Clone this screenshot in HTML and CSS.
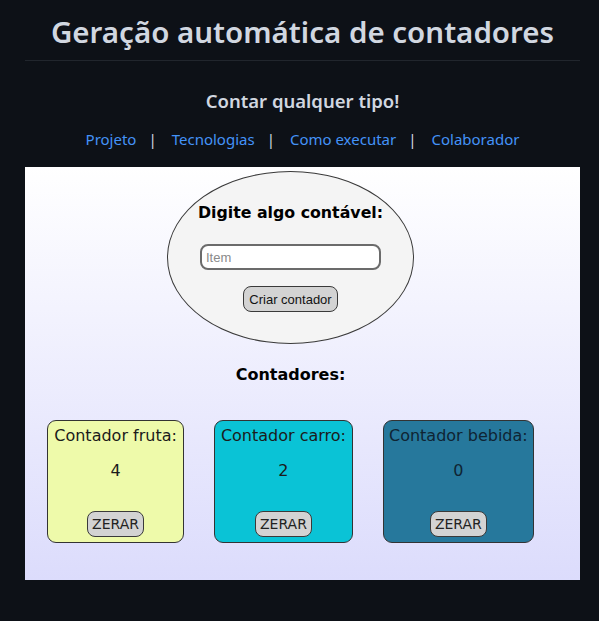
FILE: index.html
```html
<!DOCTYPE html>
<html lang="pt-BR">
<head>
<meta charset="utf-8">
<title>Geração automática de contadores</title>
<link rel="stylesheet" href="styles.css">
</head>
<body>
<main class="readme">
  <h1 class="title">Geração automática de contadores</h1>
  <h3 class="subtitle">Contar qualquer tipo!</h3>
  <nav class="links">
    <a href="#projeto">Projeto</a><span class="sep">|</span><a href="#tecnologias">Tecnologias</a><span class="sep">|</span><a href="#executar">Como executar</a><span class="sep">|</span><a href="#colaborador">Colaborador</a>
  </nav>
  <div class="shot">
    <div class="app">
      <div class="oval">
        <div class="oval-title">Digite algo contável:</div>
        <input class="item-input" type="text" placeholder="Item">
        <button class="create-btn">Criar contador</button>
      </div>
      <div class="counters-title">Contadores:</div>
      <div class="cards">
        <div class="card card-yellow">
          <div class="card-title">Contador fruta:</div>
          <div class="card-num">4</div>
          <button class="zero-btn">ZERAR</button>
        </div>
        <div class="card card-cyan">
          <div class="card-title">Contador carro:</div>
          <div class="card-num">2</div>
          <button class="zero-btn">ZERAR</button>
        </div>
        <div class="card card-blue">
          <div class="card-title">Contador bebida:</div>
          <div class="card-num">0</div>
          <button class="zero-btn">ZERAR</button>
        </div>
      </div>
    </div>
  </div>
</main>
</body>
</html>
```
FILE: styles.css
```css
html, body {
  margin: 0;
  padding: 0;
  background: #0d1117;
}
body {
  font-family: "Noto Sans", "Open Sans", sans-serif;
  color: #d1d7e0;
}
.readme {
  width: 555px;
  padding: 12px 0 0 25px;
}
.title {
  margin: 0;
  font-size: 29.5px;
  line-height: 40px;
  font-weight: 600;
  text-align: center;
  padding-bottom: 8px;
  border-bottom: 1px solid #21262d;
  color: #d1d7e0;
}
.subtitle {
  margin: 28px 0 0;
  font-size: 18.5px;
  line-height: 24px;
  font-weight: 600;
  text-align: center;
}
.links {
  margin-top: 14px;
  text-align: center;
  font-size: 15px;
  line-height: 24px;
}
.links a {
  color: #4493f8;
  text-decoration: none;
}
.sep {
  color: #d1d7e0;
  margin: 0 15px 0 12px;
}
.shot {
  margin-top: 16px;
  height: 413px;
  background: linear-gradient(to bottom, #ffffff 0%, #dcdcfc 100%);
  box-sizing: border-box;
  padding: 4px 24px 0 0;
}
.app {
  display: flex;
  flex-direction: column;
  align-items: center;
  font-family: "DejaVu Sans", Verdana, sans-serif;
  color: #111;
}
.oval {
  width: 247px;
  height: 173px;
  box-sizing: border-box;
  border: 1px solid #3a3a3a;
  border-radius: 50%;
  background: #f4f4f4;
  display: flex;
  flex-direction: column;
  align-items: center;
  padding-top: 29px;
}
.oval-title {
  font-weight: bold;
  font-size: 15.8px;
  line-height: 24px;
  color: #000;
}
.item-input {
  margin-top: 19px;
  width: 181px;
  height: 26px;
  box-sizing: border-box;
  border: 2px solid #6b6b6b;
  border-radius: 8px;
  padding: 0 4px;
  font-family: "Liberation Sans", Arial, sans-serif;
  font-size: 13px;
  background: #fff;
  outline: none;
}
.item-input::placeholder {
  color: #8a8a8a;
}
.create-btn {
  margin-top: 16px;
  height: 26px;
  box-sizing: border-box;
  padding: 0 5px;
  border: 1px solid #3a3a3a;
  border-radius: 8px;
  background: #d3d3d3;
  font-family: "Liberation Sans", Arial, sans-serif;
  font-size: 13px;
  color: #111;
}
.counters-title {
  margin-top: 19px;
  font-weight: bold;
  font-size: 16px;
  line-height: 24px;
  color: #000;
}
.cards {
  margin-top: 33px;
  display: flex;
  justify-content: center;
  gap: 30px;
}
.card {
  border: 1px solid #333;
  border-radius: 9px;
  padding: 3px 6px 5px;
  display: flex;
  flex-direction: column;
  align-items: center;
  color: #1b1b1b;
}
.card-yellow { background: #eefaaa; }
.card-cyan { background: #0ac3d6; }
.card-blue { background: #26789c; color: #0f2433; padding-left: 5px; padding-right: 5px; }
.card-title {
  font-size: 16px;
  line-height: 24px;
  white-space: nowrap;
}
.card-num {
  margin-top: 11px;
  font-size: 16px;
  line-height: 24px;
}
.zero-btn {
  margin-top: 28px;
  height: 26px;
  box-sizing: border-box;
  padding: 0 4px;
  border: 1px solid #3a3a3a;
  border-radius: 8px;
  background: #d3d3d3;
  font-family: "DejaVu Sans", Verdana, sans-serif;
  font-size: 14px;
  color: #222;
}
```
